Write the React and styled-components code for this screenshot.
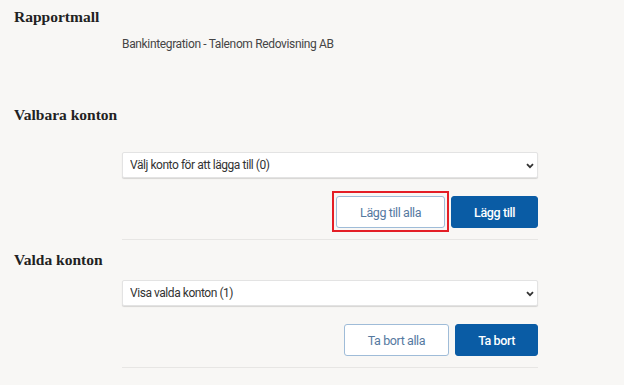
import React from "react";
import styled, { createGlobalStyle } from "styled-components";

const GlobalStyle = createGlobalStyle`
  body {
    margin: 0;
    background: #f8f7f5;
    font-family: Roboto, "Liberation Sans", Arial, sans-serif;
  }
`;

const Page = styled.div`
  width: 624px;
  height: 385px;
  padding: 7px 0 0 14px;
  box-sizing: border-box;
  overflow: hidden;
`;

const Heading = styled.h2`
  margin: ${(props) => props.top || "0"} 0 0 0;
  font-family: "Liberation Serif", "DejaVu Serif", serif;
  font-weight: 700;
  font-size: 15.5px;
  line-height: 20px;
  color: #222;
`;

// Content column, indented from the headings
const Content = styled.div`
  width: 416px;
  margin: ${(props) => props.top || "0"} 0 0 108px;
`;

const Value = styled.div`
  font-size: 12px;
  line-height: 16px;
  color: #454545;
  letter-spacing: -0.35px;
`;

const SelectWrap = styled.div`
  position: relative;
  height: 26px;
`;

const Select = styled.select`
  appearance: none;
  width: 100%;
  height: 26px;
  padding: 0 24px 0 7px;
  box-sizing: border-box;
  background: #fff;
  border: 1px solid #e3e3e3;
  border-radius: 2px;
  box-shadow: 0 1px 1px rgba(0, 0, 0, 0.14);
  font-family: Roboto, "Liberation Sans", Arial, sans-serif;
  font-size: 12px;
  letter-spacing: -0.45px;
  color: #333;
  outline: none;
`;

const Chevron = styled.svg`
  position: absolute;
  right: 4px;
  top: 11px;
  pointer-events: none;
`;

// Button row with a divider underneath
const ButtonRow = styled.div`
  display: flex;
  justify-content: flex-end;
  gap: 6px;
  margin-top: 18px;
  padding-bottom: 11px;
  border-bottom: 1px solid #e7e6e4;
`;

const Button = styled.button`
  position: relative;
  height: 32px;
  padding: 0 ${(props) => props.pad || "23px"};
  box-sizing: border-box;
  border-radius: 3px;
  font-family: Roboto, "Liberation Sans", Arial, sans-serif;
  font-size: 12.5px;
  font-weight: ${(props) => (props.primary ? 500 : 400)};
  letter-spacing: -0.4px;
  cursor: pointer;
  border: 1.5px solid ${(props) => (props.primary ? "#0a5ca5" : "#9fbcd8")};
  background: ${(props) => (props.primary ? "#0a5ca5" : "#fff")};
  color: ${(props) => (props.primary ? "#fff" : "#55799f")};
`;

const Highlight = styled.span`
  position: absolute;
  top: -6px;
  left: -5px;
  right: -5px;
  bottom: -5px;
  border: 2.5px solid #e41e26;
  pointer-events: none;
`;

const Arrow = () => (
  <Chevron width="8" height="6" viewBox="0 0 8 6">
    <path d="M1 1.2 L4 4.2 L7 1.2" fill="none" stroke="#333" strokeWidth="1.8" />
  </Chevron>
);

const App = () => {
  return (
    <Page>
      <GlobalStyle />
      <Heading>Rapportmall</Heading>
      <Content top="9px">
        <Value>Bankintegration - Talenom Redovisning AB</Value>
      </Content>

      <Heading top="53px">Valbara konton</Heading>
      <Content top="27px">
        <SelectWrap>
          <Select defaultValue="0">
            <option value="0">Välj konto för att lägga till (0)</option>
          </Select>
          <Arrow />
        </SelectWrap>
        <ButtonRow>
          <Button pad="23px">
            Lägg till alla
            <Highlight />
          </Button>
          <Button primary pad="22px">Lägg till</Button>
        </ButtonRow>
      </Content>

      <Heading top="10px">Valda konton</Heading>
      <Content top="10px">
        <SelectWrap>
          <Select defaultValue="1">
            <option value="1">Visa valda konton (1)</option>
          </Select>
          <Arrow />
        </SelectWrap>
        <ButtonRow>
          <Button>Ta bort alla</Button>
          <Button primary pad="22px">Ta bort</Button>
        </ButtonRow>
      </Content>
    </Page>
  );
};

export default App;
